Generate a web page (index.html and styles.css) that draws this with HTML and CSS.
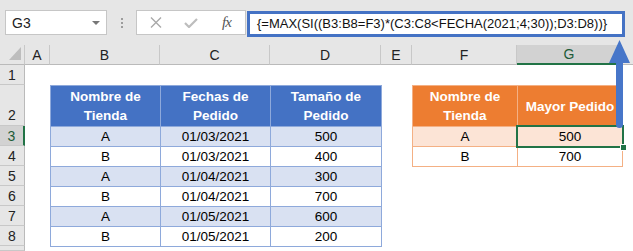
FILE: index.html
```html
<!DOCTYPE html>
<html lang="es">
<head>
  <meta charset="UTF-8" />
  <title>MAX SI con fechas</title>
  <link rel="stylesheet" href="styles.css">
</head>
<body>

  <div class="toolbar">
    <div class="namebox">
      <span>G3</span>
      <span class="caret"></span>
    </div>
    <div class="grip"><i></i><i></i><i></i></div>
    <div class="fxbtns">
      <svg class="ico" width="12" height="11" viewBox="0 0 12 11">
        <path d="M1 0.5 L11 10.5 M11 0.5 L1 10.5" stroke="#a9a9a9" stroke-width="1.4" fill="none"/>
      </svg>
      <svg class="ico" width="14" height="10" viewBox="0 0 14 10">
        <path d="M1 5 L5 9 L13 1" stroke="#bdbdbd" stroke-width="2.2" fill="none"/>
      </svg>
      <span class="fx">fx</span>
    </div>
    <div class="formula">{=MAX(SI((B3:B8=F3)*(C3:C8&lt;FECHA(2021;4;30));D3:D8))}</div>
  </div>

  <div class="sheet">
    <!-- cabecera de columnas -->
    <div class="corner"><span class="tri"></span></div>
    <div class="colhdr">A</div>
    <div class="colhdr">B</div>
    <div class="colhdr">C</div>
    <div class="colhdr">D</div>
    <div class="colhdr">E</div>
    <div class="colhdr">F</div>
    <div class="colhdr sel">G</div>
    <div class="colhdr last"></div>

    <!-- numeros de fila -->
    <div class="rowhdr">1</div>
    <div class="rowhdr tall">2</div>
    <div class="rowhdr sel">3</div>
    <div class="rowhdr">4</div>
    <div class="rowhdr">5</div>
    <div class="rowhdr">6</div>
    <div class="rowhdr">7</div>
    <div class="rowhdr">8</div>
    <div class="rowhdr last"></div>

    <!-- tabla de pedidos -->
    <div class="tbl blue">
      <div class="th">Nombre de<br>Tienda</div>
      <div class="th">Fechas de<br>Pedido</div>
      <div class="th">Tamaño de<br>Pedido</div>
      <div class="band">A</div><div class="band">01/03/2021</div><div class="band">500</div>
      <div>B</div><div>01/03/2021</div><div>400</div>
      <div class="band">A</div><div class="band">01/04/2021</div><div class="band">300</div>
      <div>B</div><div>01/04/2021</div><div>700</div>
      <div class="band">A</div><div class="band">01/05/2021</div><div class="band">600</div>
      <div>B</div><div>01/05/2021</div><div>200</div>
    </div>

    <!-- resultado -->
    <div class="tbl orange">
      <div class="th">Nombre de<br>Tienda</div>
      <div class="th">Mayor Pedido</div>
      <div class="band">A</div><div class="band active">500</div>
      <div>B</div><div>700</div>
    </div>
  </div>

  <svg class="arrow" width="28" height="94" viewBox="0 0 28 94">
    <path d="M14.5 2 L25 25 L18 25 L18 86.5 A3.5 3.5 0 0 1 11 86.5 L11 25 L4 25 Z" fill="#4776c9"/>
  </svg>

</body>
</html>
```

FILE: styles.css
```css
body {
  margin: 0;
  background: #ffffff;
  font-family: 'Liberation Sans', Arial, sans-serif;
  color: #000;
  width: 633px;
  height: 251px;
  overflow: hidden;
  position: relative;
}

/* barra de formulas */
.toolbar {
  height: 45px;
  box-sizing: border-box;
  background: #e6e6e6;
  display: flex;
  align-items: flex-start;
  padding-top: 10px;
  padding-left: 5px;
}
.namebox {
  width: 102px;
  height: 25px;
  box-sizing: border-box;
  background: white;
  border: 1px solid #c6c6c6;
  display: flex;
  align-items: center;
  justify-content: space-between;
  padding: 0 6px 0 6px;
  font-size: 14px;
  color: #222;
}
.caret {
  width: 0;
  height: 0;
  border-left: 4px solid transparent;
  border-right: 4px solid transparent;
  border-top: 4px solid #777;
}
.grip {
  margin: 8px 13px 0 14px;
  display: flex;
  flex-direction: column;
  gap: 2px;
}
.grip i {
  display: block;
  width: 2px;
  height: 2px;
  background: #9c9c9c;
}
.fxbtns {
  width: 110px;
  height: 25px;
  box-sizing: border-box;
  background: white;
  border: 1px solid #c6c6c6;
  display: flex;
  align-items: center;
  padding-left: 13px;
  gap: 22px;
}
.fx {
  font-family: 'Liberation Serif', serif;
  font-style: italic;
  font-size: 15px;
  color: #555;
  letter-spacing: -1px;
  margin-left: 2px;
}
.formula {
  margin-left: 1px;
  margin-top: 1px;
  width: 378px;
  height: 26px;
  box-sizing: border-box;
  background: white;
  border: 3px solid #4472c4;
  font-size: 13px;
  line-height: 20px;
  padding-left: 7px;
  white-space: nowrap;
  color: #111;
}

/* hoja */
.sheet {
  display: grid;
  grid-template-columns: 25px 25px 110px 110px 111px 31px 105px 105px 1fr;
  grid-template-rows: 20px 20px 41px repeat(6, 20px) 1fr;
  height: 206px;
  font-size: 13.5px;
}
.corner {
  background: #e6e6e6;
  border-right: 1px solid #c8c8c8;
  border-bottom: 1px solid #bababa;
  display: flex;
  align-items: flex-end;
  justify-content: flex-end;
  padding: 0 3px 4px 0;
  box-sizing: border-box;
}
.tri {
  width: 0;
  height: 0;
  border-left: 12px solid transparent;
  border-bottom: 13px solid #bdbdbd;
}
.colhdr {
  background: #e6e6e6;
  border-right: 1px solid #c8c8c8;
  border-bottom: 1px solid #bababa;
  box-sizing: border-box;
  display: flex;
  align-items: center;
  justify-content: center;
  font-size: 14px;
  color: #222;
}
.colhdr.sel {
  background: #d2d2d2;
  border-bottom: 2px solid #217346;
  color: #1e5b38;
}
.colhdr.last {
  border-right: none;
}
.rowhdr {
  grid-column: 1;
  background: #e6e6e6;
  border-right: 1px solid #bababa;
  border-bottom: 1px solid #c8c8c8;
  box-sizing: border-box;
  display: flex;
  align-items: center;
  justify-content: center;
  font-size: 14px;
  color: #222;
}
.rowhdr.tall {
  align-items: flex-end;
  padding-bottom: 2px;
}
.rowhdr.sel {
  background: #d2d2d2;
  border-right: 2px solid #217346;
  color: #1e5b38;
}

/* tablas con formato */
.tbl {
  display: grid;
  gap: 1px;
  padding: 1px;
  align-self: start;
  justify-self: start;
}
.tbl > div {
  background: white;
  display: flex;
  align-items: center;
  justify-content: center;
  text-align: center;
}
.tbl .th {
  color: white;
  font-weight: bold;
  line-height: 19px;
}
.blue {
  grid-column: 3 / 6;
  grid-row: 3 / 10;
  background: #8ea9db;
  grid-template-columns: 109px 109px 110px;
  grid-template-rows: 40px repeat(6, 19px);
}
.blue .th { background: #4472c4; }
.blue .band { background: #d9e1f2; }

.orange {
  grid-column: 7 / 9;
  grid-row: 3 / 6;
  background: #f4b084;
  grid-template-columns: 104px 104px;
  grid-template-rows: 40px 19px 19px;
}
.orange .th { background: #ed7d31; }
.orange .band { background: #fce4d6; }

/* celda activa G3 */
.tbl .active {
  position: relative;
}
.active::after {
  content: '';
  position: absolute;
  left: -2px;
  top: -2px;
  right: -2px;
  bottom: -2px;
  border: 2px solid #217346;
}
.active::before {
  content: '';
  position: absolute;
  right: -5px;
  bottom: -5px;
  width: 5px;
  height: 5px;
  background: #217346;
  border: 1px solid white;
  z-index: 1;
}

.arrow {
  position: absolute;
  left: 605px;
  top: 38px;
}
```
